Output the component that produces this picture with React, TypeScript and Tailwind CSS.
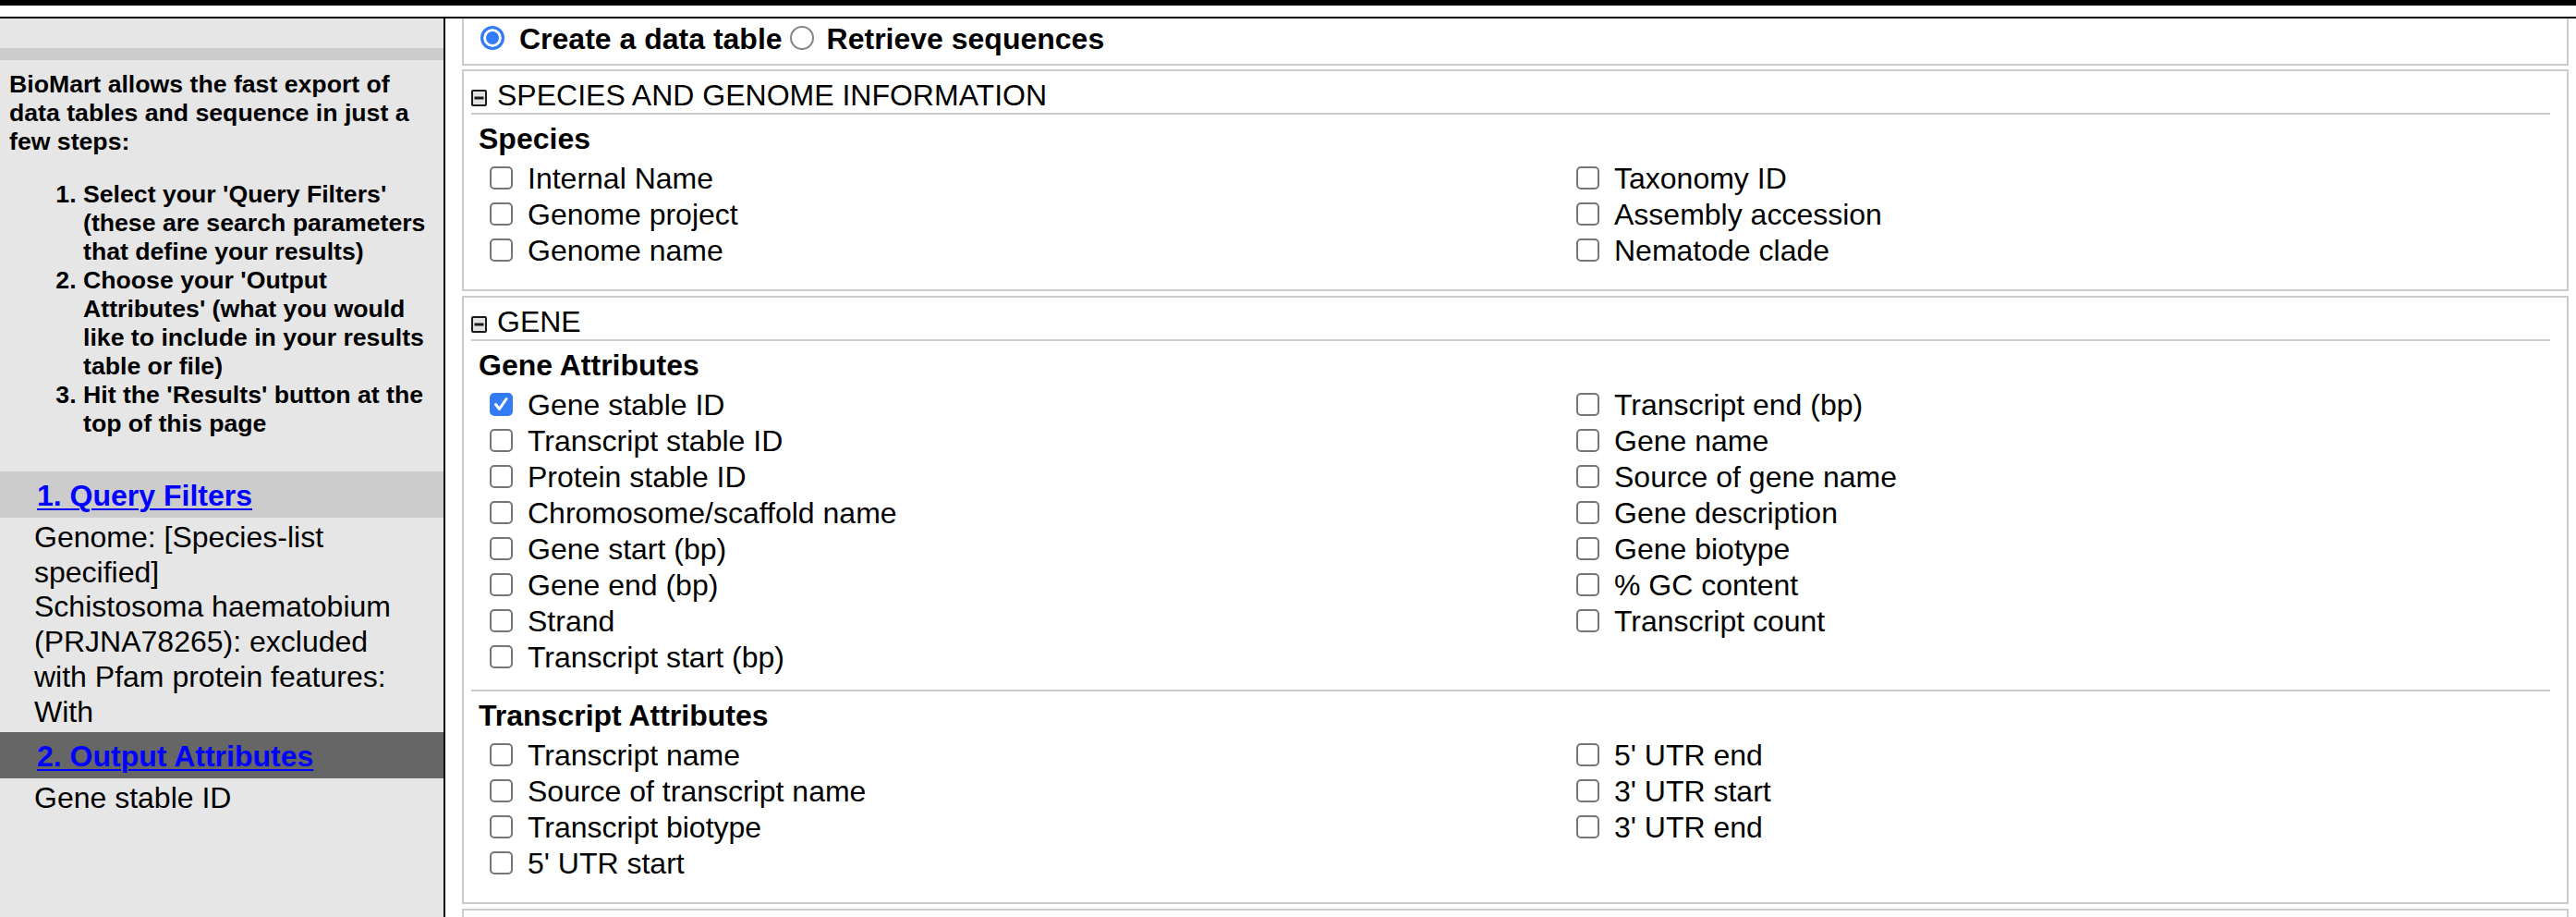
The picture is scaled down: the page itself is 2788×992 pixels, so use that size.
import type { ReactNode } from "react";

const speciesLeft = ["Internal Name", "Genome project", "Genome name"];
const speciesRight = ["Taxonomy ID", "Assembly accession", "Nematode clade"];

const geneLeft = [
  "Gene stable ID",
  "Transcript stable ID",
  "Protein stable ID",
  "Chromosome/scaffold name",
  "Gene start (bp)",
  "Gene end (bp)",
  "Strand",
  "Transcript start (bp)",
];
const geneRight = [
  "Transcript end (bp)",
  "Gene name",
  "Source of gene name",
  "Gene description",
  "Gene biotype",
  "% GC content",
  "Transcript count",
];

const transcriptLeft = ["Transcript name", "Source of transcript name", "Transcript biotype", "5' UTR start"];
const transcriptRight = ["5' UTR end", "3' UTR start", "3' UTR end"];

const checkedByDefault = ["Gene stable ID"];

function Checkbox({ label }: { label: string }) {
  return (
    <label className="flex h-[39px] items-center">
      <span className="relative mb-[3px] block h-[25px] w-[25px] shrink-0">
        <input
          type="checkbox"
          defaultChecked={checkedByDefault.includes(label)}
          className="peer m-0 block h-[25px] w-[25px] appearance-none rounded-[5px] border-2 border-[#767676] bg-white checked:border-[#347cf6] checked:bg-[#347cf6]"
        />
        <svg
          className="pointer-events-none absolute inset-0 hidden peer-checked:block"
          width="25"
          height="25"
          viewBox="0 0 25 25"
        >
          <path d="M6.5 12.5 L10.5 17.5 L18 6.5" fill="none" stroke="white" strokeWidth="3" strokeLinecap="round" strokeLinejoin="round" />
        </svg>
      </span>
      <span className="ml-[16px] whitespace-nowrap text-[32px] leading-[37px]">{label}</span>
    </label>
  );
}

function CollapseIcon() {
  return (
    <svg className="mt-[5px] shrink-0" width="17" height="18" viewBox="0 0 17 18">
      <rect x="1" y="1" width="15" height="16" rx="1" fill="#e2e2e2" stroke="#1a1a1a" strokeWidth="2" />
      <rect x="3.5" y="7.5" width="10" height="3" fill="#1a1a1a" />
    </svg>
  );
}

function Group({ title, left, right, divider }: { title: string; left: string[]; right: string[]; divider?: boolean }) {
  return (
    <div className={divider ? "mt-[15px] border-t-2 border-[#cccccc] pt-[8px]" : "pt-[8px]"}>
      <div className="ml-[8px] text-[32px] font-bold leading-[37px]">{title}</div>
      <div className="mt-[5px] grid grid-cols-[1176px_1fr] pl-[20px]">
        <div>
          {left.map((l) => (
            <Checkbox key={l} label={l} />
          ))}
        </div>
        <div>
          {right.map((l) => (
            <Checkbox key={l} label={l} />
          ))}
        </div>
      </div>
    </div>
  );
}

function Section({ title, children, first }: { title: string; children: ReactNode; first?: boolean }) {
  return (
    <section className={`${first ? "mt-[4px]" : "mt-[5px]"} border-2 border-[#cccccc] pb-[22px] pl-[8px] pr-[18px]`}>
      <div className="mt-[8px] flex h-[39px] items-center gap-[11px] border-b-2 border-[#cccccc]">
        <CollapseIcon />
        <span className="text-[32px] leading-[37px]">{title}</span>
      </div>
      {children}
    </section>
  );
}

function Radio({ name, checked }: { name: string; checked?: boolean }) {
  return (
    <input
      type="radio"
      name={name}
      defaultChecked={checked}
      className="m-0 mb-[4px] block h-[26px] w-[26px] shrink-0 appearance-none rounded-full border-2 border-[#858585] bg-white checked:border-[3px] checked:border-[#347cf6] checked:bg-[#347cf6] checked:shadow-[inset_0_0_0_3px_white]"
    />
  );
}

function Sidebar() {
  return (
    <aside className="w-[482px] shrink-0 border-r-2 border-black bg-[#e6e6e6]">
      <div className="h-[32px]" />
      <div className="h-[13px] bg-[#cccccc]" />
      <div className="pl-[10px] pr-[14px] pt-[11px] text-[26.67px] font-bold leading-[31px]">
        <p>BioMart allows the fast export of data tables and sequence in just a few steps:</p>
        <ol className="mt-[26px] list-decimal pl-[80px]">
          <li>Select your 'Query Filters' (these are search parameters that define your results)</li>
          <li>Choose your 'Output Attributes' (what you would like to include in your results table or file)</li>
          <li>Hit the 'Results' button at the top of this page</li>
        </ol>
      </div>
      <div className="mt-[36px] flex h-[50px] items-center bg-[#cccccc] pl-[40px] pt-[3px]">
        <a href="#" className="text-[32px] font-bold leading-[37px] text-[#0000ff] underline decoration-2 underline-offset-[3px]">
          1. Query Filters
        </a>
      </div>
      <div className="pl-[37px] pr-[30px] pt-[3px] text-[32px] leading-[37.7px]">
        <div>Genome: [Species-list specified]</div>
        <div>Schistosoma haematobium (PRJNA78265): excluded with Pfam protein features: With</div>
      </div>
      <div className="mt-[3px] flex h-[50px] items-center bg-[#666666] pl-[40px] pt-[3px]">
        <a href="#" className="text-[32px] font-bold leading-[37px] text-[#0000ff] underline decoration-2 underline-offset-[3px]">
          2. Output Attributes
        </a>
      </div>
      <div className="pl-[37px] pt-[3px] text-[32px] leading-[37.7px]">Gene stable ID</div>
    </aside>
  );
}

export default function App() {
  return (
    <div className="h-[992px] overflow-hidden bg-white font-[family-name:'Liberation_Sans',Arial,Helvetica,sans-serif] text-black">
      <div className="h-[6px] bg-black" />
      <div className="h-[12px]" />
      <div className="h-[2px] bg-black" />
      <div className="flex h-[972px]">
        <Sidebar />
        <main className="min-w-0 flex-1 pl-[18px] pr-[8px]">
          <div className="h-[51px] border-x-2 border-b-2 border-[#cccccc] pt-[4px]">
            <div className="flex h-[37px] items-center pl-[18px] text-[32px] font-bold leading-[37px]">
              <Radio name="mode" checked />
              <span className="ml-[16px]">Create a data table</span>
              <span className="ml-[8px]">
                <Radio name="mode" />
              </span>
              <span className="ml-[14px]">Retrieve sequences</span>
            </div>
          </div>
          <Section title="SPECIES AND GENOME INFORMATION" first>
            <Group title="Species" left={speciesLeft} right={speciesRight} />
          </Section>
          <Section title="GENE">
            <Group title="Gene Attributes" left={geneLeft} right={geneRight} />
            <Group title="Transcript Attributes" left={transcriptLeft} right={transcriptRight} divider />
          </Section>
          <section className="mt-[5px] h-[200px] border-2 border-[#cccccc]" />
        </main>
      </div>
    </div>
  );
}
